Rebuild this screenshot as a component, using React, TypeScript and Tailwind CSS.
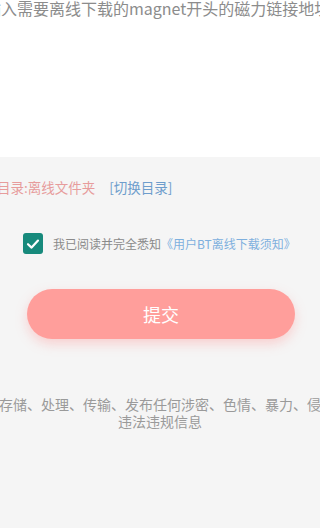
import React, { useState } from "react";

export default function App() {
    const [link, setLink] = useState("");
    const [agreed, setAgreed] = useState(true);

    return (
        <div className="w-[320px] h-[528px] overflow-hidden bg-[#f5f5f5] font-['Noto_Sans_CJK_SC',sans-serif]">
            <div className="h-[157px] bg-white overflow-hidden">
                <div className="-ml-[31px] whitespace-nowrap text-[16px] leading-[16px] text-[#8c8c8c]">
                    {link || "请输入需要离线下载的magnet开头的磁力链接地址"}
                </div>
                <textarea className="hidden" value={link} onChange={(e) => setLink(e.target.value)} />
            </div>

            <div className="mt-[20px] flex items-center whitespace-nowrap text-[13.5px] leading-[20px]">
                <span className="-ml-[30px] text-[#e79c9c]">保存目录:离线文件夹</span>
                <span className="ml-[14px] text-[#6e9dcc]">[切换目录]</span>
            </div>

            <div className="mt-[36px] flex items-center whitespace-nowrap text-[12px] leading-[20px]">
                <button
                    className="ml-[23px] w-[20px] h-[21px] rounded-[3px] bg-[#178a7c] flex items-center justify-center"
                    onClick={() => setAgreed(!agreed)}
                >
                    {agreed && (
                        <svg width="14" height="14" viewBox="0 0 14 14" fill="none">
                            <path d="M2 7.2 L5.6 10.6 L12 3.6" stroke="white" strokeWidth="2.2" strokeLinecap="round" strokeLinejoin="round" />
                        </svg>
                    )}
                </button>
                <span className="ml-[10px] text-[#8a8a8a]">我已阅读并完全悉知</span>
                <span className="text-[#7eb0de]">《用户BT离线下载须知》</span>
            </div>

            <div className="mt-[35px] px-[27px] pr-[25px]">
                <button className="w-full h-[50px] rounded-full bg-[#ff9e9b] text-white text-[18px] shadow-[0_5px_12px_rgba(255,140,140,0.35)]">
                    提交
                </button>
            </div>

            <div className="mt-[57px] text-[14px] leading-[17px] text-[#9a9a9a]">
                <div className="flex justify-center whitespace-nowrap">请勿存储、处理、传输、发布任何涉密、色情、暴力、侵权等</div>
                <div className="flex justify-center whitespace-nowrap">违法违规信息</div>
            </div>
        </div>
    );
}
